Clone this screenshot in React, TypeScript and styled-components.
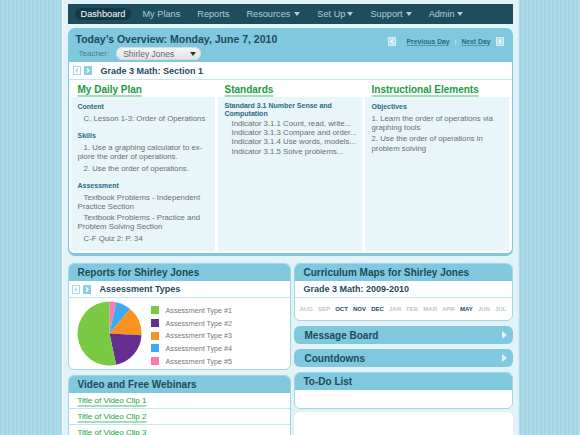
import React from 'react';
import styled, { createGlobalStyle } from 'styled-components';

const GlobalStyle = createGlobalStyle`
  html, body {
    margin: 0;
    padding: 0;
  }
  body {
    font-family: "Liberation Sans", Arial, sans-serif;
    background: repeating-linear-gradient(90deg, #a3d5e5 0 2px, #aedcea 2px 4px);
    min-height: 435px;
  }
`;

const Page = styled.div`
  box-sizing: border-box;
  width: 457px;
  min-height: 435px;
  margin: 0 auto;
  padding: 4px 5px 0;
  background: #e2f3f8;
  border-left: 1px solid #f3fbfd;
  border-right: 1px solid #d3eef5;
`;

const Nav = styled.nav`
  display: flex;
  align-items: center;
  gap: 5px;
  height: 20px;
  padding: 0 7px;
  margin-bottom: 4px;
  background: #1e4d5e;
`;

const NavItem = styled.span<{ $active?: boolean }>`
  display: inline-flex;
  align-items: center;
  height: 12px;
  padding: 0 6px;
  border-radius: 6px;
  font-size: 9.2px;
  color: ${(p) => (p.$active ? '#ffffff' : '#a7d0dd')};
  background: ${(p) => (p.$active ? '#143a48' : 'transparent')};
`;

const Caret = styled.span<{ $gap?: number; $color?: string }>`
  display: inline-block;
  margin-left: ${(p) => p.$gap ?? 2}px;
  border-left: 3.5px solid transparent;
  border-right: 3.5px solid transparent;
  border-top: 4px solid ${(p) => p.$color ?? 'currentColor'};
`;

const Overview = styled.section`
  background: #80c8dd;
  border-radius: 7px;
  padding: 0 1px 3px;
  margin-bottom: 7px;
`;

const OverviewHeader = styled.header`
  box-sizing: border-box;
  height: 34px;
  display: flex;
  justify-content: space-between;
  padding: 5px 8px 0 7px;
`;

const Title = styled.h1`
  margin: 0;
  font-size: 10.5px;
  line-height: 12px;
  font-weight: bold;
  color: #1d4b5c;
`;

const TeacherRow = styled.div`
  display: flex;
  align-items: center;
  gap: 7px;
  margin: 2px 0 0 3px;
  font-size: 8px;
  color: #4b7c8b;
`;

const Select = styled.div`
  box-sizing: border-box;
  width: 85px;
  height: 13px;
  display: flex;
  align-items: center;
  justify-content: space-between;
  padding: 0 5px 0 7px;
  border-radius: 7px;
  background: linear-gradient(#f6f8f8, #dde3e5);
  box-shadow: inset 0 0 0 1px #d3dcdf;
  font-size: 8.5px;
  color: #6a6a6a;
`;

const DayNav = styled.div`
  display: flex;
  align-items: center;
  gap: 5px;
  height: 10px;
  margin-top: 3px;
  font-size: 6.8px;
  font-weight: bold;
  color: #2a6a80;
`;

const DayLink = styled.span<{ $ml?: number }>`
  margin-left: ${(p) => p.$ml ?? 0}px;
  text-decoration: underline;
  text-decoration-color: #5a95a8;
`;

const Sep = styled.span`
  color: #d5eef5;
  font-weight: normal;
`;

const ArrowBox = styled.span<{ $tone: 'soft' | 'on' | 'off' }>`
  box-sizing: border-box;
  display: inline-flex;
  align-items: center;
  justify-content: center;
  width: 8px;
  height: 9px;
  border: 1px solid
    ${(p) => (p.$tone === 'off' ? '#a9d9e7' : p.$tone === 'on' ? '#8dcfe2' : '#d3edf4')};
  background: ${(p) => (p.$tone === 'off' ? '#ffffff' : p.$tone === 'on' ? '#8dcfe2' : '#b5dfeb')};
  color: ${(p) => (p.$tone === 'off' ? '#a9d9e7' : '#ffffff')};
`;

const WhiteArea = styled.div`
  background: #ffffff;
  border-radius: 0 0 5px 5px;
  padding-bottom: 2px;
`;

const SectionRow = styled.div`
  display: flex;
  align-items: center;
  gap: 3px;
  height: 17px;
  padding: 0 4px;
  border-bottom: 1px solid #c4e6ef;
`;

const SubTitle = styled.span`
  margin-left: 6px;
  font-size: 9px;
  font-weight: bold;
  color: #1d4b5c;
`;

const Columns = styled.div`
  display: grid;
  grid-template-columns: repeat(3, 1fr);
  gap: 3px;
  padding: 0 3px 0 2px;
`;

const Column = styled.div`
  display: flex;
  flex-direction: column;
`;

const ColHead = styled.h2`
  box-sizing: border-box;
  height: 17px;
  margin: 0;
  padding: 2px 7px 0;
  display: flex;
  align-items: center;
  font-size: 10px;
  font-weight: bold;
  color: #1a9b45;
  text-decoration: underline;
  text-decoration-color: #a6dfb5;
  text-decoration-thickness: 1.5px;
  text-underline-offset: 2px;
`;

const ColBody = styled.div`
  box-sizing: border-box;
  height: 154px;
  padding: 5px 3px 5px 7px;
  background: #e8f5f9;
`;

const Group = styled.div`
  margin-bottom: 8px;
`;

const Label = styled.div<{ $lh?: number }>`
  font-size: 7px;
  line-height: ${(p) => p.$lh ?? 9}px;
  font-weight: bold;
  color: #2a6a80;
  margin-bottom: ${(p) => (p.$lh ? 1 : 3)}px;
`;

const Para = styled.p<{ $indent?: number }>`
  margin: 0 0 2px;
  font-size: 7.8px;
  line-height: 9.2px;
  color: #6e6e6e;
  text-indent: ${(p) => p.$indent ?? 0}px;
`;

const Indicator = styled.div`
  padding-left: 7px;
  font-size: 7.8px;
  line-height: 9.2px;
  color: #6e6e6e;
  white-space: nowrap;
`;

const Bottom = styled.div`
  display: grid;
  grid-template-columns: 223px 1fr;
  gap: 3px;
`;

const Stack = styled.div`
  display: flex;
  flex-direction: column;
`;

const Card = styled.section<{ $mb?: number }>`
  background: #ffffff;
  border: 1px solid #a3d6e5;
  border-radius: 6px;
  overflow: hidden;
  margin-bottom: ${(p) => p.$mb ?? 0}px;
`;

const CardHeader = styled.h3`
  box-sizing: border-box;
  height: 17px;
  margin: 0;
  padding: 0 9px;
  display: flex;
  align-items: center;
  background: #80c8dd;
  font-size: 10px;
  font-weight: bold;
  color: #1d4b5c;
`;

const SubRow = styled.div`
  display: flex;
  align-items: center;
  gap: 3px;
  height: 16px;
  padding: 0 3px;
  border-bottom: 1px solid #c4e6ef;
`;

const ChartArea = styled.div`
  display: flex;
  height: 71px;
  padding: 3px 0 0 8px;
  box-sizing: border-box;
`;

const Legend = styled.ul`
  list-style: none;
  margin: 3px 0 0 9px;
  padding: 0;
`;

const LegendItem = styled.li`
  display: flex;
  align-items: center;
  height: 12.7px;
  font-size: 7.2px;
  color: #777777;
`;

const Swatch = styled.span<{ $color: string }>`
  width: 8px;
  height: 8px;
  margin-right: 7px;
  background: ${(p) => p.$color};
`;

const VideoRow = styled.div`
  box-sizing: border-box;
  height: 16px;
  display: flex;
  align-items: center;
  padding: 0 9px;
  border-bottom: 1px solid #c4e6ef;
`;

const GreenLink = styled.span`
  font-size: 8px;
  color: #1a9b45;
  text-decoration: underline;
  text-decoration-color: #a6dfb5;
  text-decoration-thickness: 1.5px;
  text-underline-offset: 1.5px;
`;

const YearRow = styled.div`
  box-sizing: border-box;
  height: 17px;
  display: flex;
  align-items: center;
  padding: 0 9px;
  border-bottom: 1px solid #c4e6ef;
  font-size: 9px;
  font-weight: bold;
  color: #1d4b5c;
`;

const Months = styled.div`
  height: 22px;
  display: flex;
  align-items: center;
  justify-content: space-between;
  padding: 0 5px;
`;

const Month = styled.span<{ $active?: boolean }>`
  font-size: 6px;
  font-weight: bold;
  color: ${(p) => (p.$active ? '#1d4b5c' : '#b9c6cb')};
`;

const Bar = styled.div<{ $mb?: number }>`
  box-sizing: border-box;
  height: 18px;
  display: flex;
  align-items: center;
  justify-content: space-between;
  padding: 0 6px 0 11px;
  margin-bottom: ${(p) => p.$mb ?? 0}px;
  border-radius: 6px;
  background: #80c8dd;
  font-size: 10px;
  font-weight: bold;
  color: #1d4b5c;
`;

const PlayArrow = styled.span`
  border-top: 4px solid transparent;
  border-bottom: 4px solid transparent;
  border-left: 5px solid #e2f3f8;
`;

const TodoBody = styled.div`
  height: 18px;
`;

const Filler = styled.div`
  height: 40px;
  margin-top: 3px;
  background: #ffffff;
  border-radius: 6px 6px 0 0;
`;

const Chevron = ({ dir }: { dir: 'left' | 'right' }) => (
  <svg width="4" height="5" viewBox="0 0 4 5">
    <polyline
      points={dir === 'left' ? '3,0.5 1,2.5 3,4.5' : '1,0.5 3,2.5 1,4.5'}
      fill="none"
      stroke="currentColor"
      strokeWidth="1.2"
    />
  </svg>
);

const slices = [
  { from: 0, to: 12, color: '#ff7bac' },
  { from: 12, to: 40, color: '#3fa9f5' },
  { from: 40, to: 93, color: '#f7931e' },
  { from: 93, to: 168, color: '#662d91' },
  { from: 168, to: 360, color: '#7ac943' },
];

const point = (deg: number, r: number, c: number) => {
  const rad = ((deg - 90) * Math.PI) / 180;
  return `${(c + r * Math.cos(rad)).toFixed(2)} ${(c + r * Math.sin(rad)).toFixed(2)}`;
};

const Pie = () => (
  <svg width="65" height="65" viewBox="0 0 65 65">
    {slices.map((s) => (
      <path
        key={s.color}
        d={`M32.5 32.5 L${point(s.from, 32, 32.5)} A32 32 0 ${s.to - s.from > 180 ? 1 : 0} 1 ${point(s.to, 32, 32.5)} Z`}
        fill={s.color}
      />
    ))}
  </svg>
);

const navItems = [
  { label: 'Dashboard', active: true },
  { label: 'My Plans' },
  { label: 'Reports' },
  { label: 'Resources', caret: 4 },
  { label: 'Set Up', caret: 2 },
  { label: 'Support', caret: 3 },
  { label: 'Admin', caret: 2 },
];

const months = ['AUG', 'SEP', 'OCT', 'NOV', 'DEC', 'JAN', 'FEB', 'MAR', 'APR', 'MAY', 'JUN', 'JUL'];
const activeMonths = ['OCT', 'NOV', 'DEC', 'MAY'];

const App = () => (
  <>
    <GlobalStyle />
    <Page>
      <Nav>
        {navItems.map((item) => (
          <NavItem key={item.label} $active={item.active}>
            {item.label}
            {item.caret !== undefined && <Caret $gap={item.caret} />}
          </NavItem>
        ))}
      </Nav>

      <Overview>
        <OverviewHeader>
          <div>
            <Title>Today&#8217;s Overview: Monday, June 7, 2010</Title>
            <TeacherRow>
              Teacher:
              <Select>
                Shirley Jones
                <Caret $color="#333333" />
              </Select>
            </TeacherRow>
          </div>
          <DayNav>
            <ArrowBox $tone="soft"><Chevron dir="left" /></ArrowBox>
            <DayLink $ml={6}>Previous Day</DayLink>
            <Sep>|</Sep>
            <DayLink>Next Day</DayLink>
            <ArrowBox $tone="soft"><Chevron dir="right" /></ArrowBox>
          </DayNav>
        </OverviewHeader>

        <WhiteArea>
          <SectionRow>
            <ArrowBox $tone="off"><Chevron dir="left" /></ArrowBox>
            <ArrowBox $tone="on"><Chevron dir="right" /></ArrowBox>
            <SubTitle>Grade 3 Math: Section 1</SubTitle>
          </SectionRow>
          <Columns>
            <Column>
              <ColHead>My Daily Plan</ColHead>
              <ColBody>
                <Group>
                  <Label>Content</Label>
                  <Para $indent={6}>C. Lesson 1-3: Order of Operations</Para>
                </Group>
                <Group>
                  <Label>Skills</Label>
                  <Para $indent={6}>1. Use a graphing calculator to ex-plore the order of operations.</Para>
                  <Para $indent={6}>2. Use the order of operations.</Para>
                </Group>
                <Group>
                  <Label>Assessment</Label>
                  <Para $indent={6}>Textbook Problems - Independent Practice Section</Para>
                  <Para $indent={6}>Textbook Problems - Practice and Problem Solving Section</Para>
                  <Para $indent={6}>C-F Quiz 2: P. 34</Para>
                </Group>
              </ColBody>
            </Column>
            <Column>
              <ColHead>Standards</ColHead>
              <ColBody>
                <Label $lh={8}>
                  Standard 3.1 Number Sense and
                  <br />
                  Computation
                </Label>
                <Indicator>Indicator 3.1.1 Count, read, write...</Indicator>
                <Indicator>Indicator 3.1.3 Compare and order...</Indicator>
                <Indicator>Indicator 3.1.4 Use words, models...</Indicator>
                <Indicator>Indicator 3.1.5 Solve problems...</Indicator>
              </ColBody>
            </Column>
            <Column>
              <ColHead>Instructional Elements</ColHead>
              <ColBody>
                <Label>Objectives</Label>
                <Para>1. Learn the order of operations via graphing tools</Para>
                <Para>2. Use the order of operations in problem solving</Para>
              </ColBody>
            </Column>
          </Columns>
        </WhiteArea>
      </Overview>

      <Bottom>
        <Stack>
          <Card $mb={5}>
            <CardHeader>Reports for Shirley Jones</CardHeader>
            <SubRow>
              <ArrowBox $tone="off"><Chevron dir="left" /></ArrowBox>
              <ArrowBox $tone="on"><Chevron dir="right" /></ArrowBox>
              <SubTitle>Assessment Types</SubTitle>
            </SubRow>
            <ChartArea>
              <Pie />
              <Legend>
                {['#7ac943', '#662d91', '#f7931e', '#3fa9f5', '#ff7bac'].map((c, i) => (
                  <LegendItem key={c}>
                    <Swatch $color={c} />
                    Assessment Type #{i + 1}
                  </LegendItem>
                ))}
              </Legend>
            </ChartArea>
          </Card>
          <Card>
            <CardHeader>Video and Free Webinars</CardHeader>
            {[1, 2, 3].map((n) => (
              <VideoRow key={n}>
                <GreenLink>Title of Video Clip {n}</GreenLink>
              </VideoRow>
            ))}
          </Card>
        </Stack>

        <Stack>
          <Card $mb={5}>
            <CardHeader>Curriculum Maps for Shirley Jones</CardHeader>
            <YearRow>Grade 3 Math: 2009-2010</YearRow>
            <Months>
              {months.map((m) => (
                <Month key={m} $active={activeMonths.includes(m)}>{m}</Month>
              ))}
            </Months>
          </Card>
          <Bar $mb={5}>
            Message Board
            <PlayArrow />
          </Bar>
          <Bar $mb={5}>
            Countdowns
            <PlayArrow />
          </Bar>
          <Card>
            <CardHeader>To-Do List</CardHeader>
            <TodoBody />
          </Card>
          <Filler />
        </Stack>
      </Bottom>
    </Page>
  </>
);

export default App;
